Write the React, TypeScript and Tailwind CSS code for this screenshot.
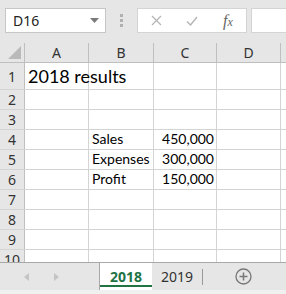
import React from "react";

const cols = [64, 65, 63, 64, 20];
const colNames = ["A", "B", "C", "D", ""];
const rowHeights = [27, 20, 20, 20, 20, 20, 20, 20, 20, 20];

type Cell = { text: string; align?: "left" | "right"; big?: boolean };
const data: Record<string, Cell> = {
  "0-0": { text: "2018 results", big: true },
  "3-1": { text: "Sales" },
  "3-2": { text: "450,000", align: "right" },
  "4-1": { text: "Expenses" },
  "4-2": { text: "300,000", align: "right" },
  "5-1": { text: "Profit" },
  "5-2": { text: "150,000", align: "right" },
};

export default function App() {
  return (
    <div className="w-[286px] h-[294px] overflow-hidden bg-white flex flex-col" style={{ fontFamily: "Lato, 'Noto Sans', sans-serif" }}>
      {/* Formula bar area */}
      <div className="h-[43px] shrink-0 bg-[#e6e6e6] flex items-start pt-[8px] pl-[5px]">
        <div className="w-[101px] h-[25px] bg-white border border-[#c6c6c6] flex items-center justify-between pl-[7px] pr-[6px]">
          <span className="text-[14px] text-[#222]" style={{ fontFamily: "'Noto Sans', sans-serif" }}>D16</span>
          <svg width="9" height="5" viewBox="0 0 9 5"><path d="M0 0h9L4.5 5z" fill="#7a7a7a" /></svg>
        </div>
        <div className="w-[31px] h-[25px] flex flex-col items-center justify-center gap-[2px]">
          <div className="w-[3px] h-[3px] bg-[#b0b0b0]" />
          <div className="w-[3px] h-[3px] bg-[#b0b0b0]" />
          <div className="w-[3px] h-[3px] bg-[#b0b0b0]" />
        </div>
        <div className="w-[110px] h-[25px] bg-white border border-[#d4d4d4] flex items-center">
          <div className="w-[36px] flex justify-center">
            <svg width="11" height="11" viewBox="0 0 11 11"><path d="M1 1l9 9M10 1l-9 9" stroke="#b4b4b4" strokeWidth="1.2" /></svg>
          </div>
          <div className="w-[36px] flex justify-center">
            <svg width="12" height="10" viewBox="0 0 12 10"><path d="M1 5.5l3.5 3.5L11 1" stroke="#b4b4b4" strokeWidth="1.4" fill="none" /></svg>
          </div>
          <div className="w-[36px] flex justify-center">
            <span className="text-[16px] italic text-[#666] leading-none" style={{ fontFamily: "'Liberation Serif', serif" }}>f<span className="text-[12px]">x</span></span>
          </div>
        </div>
        <div className="ml-[4px] flex-1 h-[25px] bg-white border-y border-l border-[#d4d4d4]" />
      </div>

      {/* Column header */}
      <div className="h-[20px] shrink-0 flex bg-[#e6e6e6] border-b border-[#bfbfbf]">
        <div className="w-[25px] shrink-0 border-r border-[#bfbfbf] relative">
          <svg className="absolute right-[3px] bottom-[3px]" width="13" height="13" viewBox="0 0 13 13"><path d="M13 0V13H0z" fill="#b9b9b9" /></svg>
        </div>
        {cols.map((w, i) => (
          <div key={i} className="shrink-0 border-r border-[#bfbfbf] flex items-center justify-center text-[14px] text-[#333]" style={{ width: w, fontFamily: "'Noto Sans', sans-serif" }}>
            {colNames[i]}
          </div>
        ))}
      </div>

      {/* Grid */}
      <div className="flex-1 overflow-hidden">
        {rowHeights.map((h, r) => (
          <div key={r} className="flex border-b border-[#d4d4d4]" style={{ height: h }}>
            <div className="w-[25px] shrink-0 bg-[#e6e6e6] border-r border-[#bfbfbf] flex items-center justify-center text-[14px] text-[#333]" style={{ fontFamily: "'Noto Sans', sans-serif" }}>
              {r + 1}
            </div>
            {cols.map((w, c) => {
              const cell = data[`${r}-${c}`];
              return (
                <div key={c} className={`shrink-0 border-r border-[#d4d4d4] flex items-end pb-[1px] whitespace-nowrap overflow-visible ${cell?.align === "right" ? "justify-end pr-[2px]" : "pl-[3px]"}`} style={{ width: w }}>
                  {cell && (
                    <span className={cell.big ? "text-[18px] text-black leading-[24px]" : "text-[14px] text-black leading-[18px]"}>{cell.text}</span>
                  )}
                </div>
              );
            })}
          </div>
        ))}
      </div>

      {/* Sheet tabs */}
      <div className="h-[28px] shrink-0 flex bg-[#e6e6e6] border-t border-[#a8a8a8]">
        <div className="w-[100px] shrink-0 border-r border-[#a8a8a8] flex items-center">
          <div className="w-[29px] flex justify-end">
            <svg width="5" height="8" viewBox="0 0 5 8"><path d="M5 0v8L0 4z" fill="#c4c4c4" /></svg>
          </div>
          <div className="w-[30px] flex justify-end">
            <svg width="5" height="8" viewBox="0 0 5 8"><path d="M0 0v8l5-4z" fill="#c4c4c4" /></svg>
          </div>
        </div>
        <div className="w-[52px] shrink-0 bg-white flex items-center justify-center relative">
          <span className="text-[14px] font-bold text-[#217346]" style={{ fontFamily: "'Noto Sans', sans-serif" }}>2018</span>
          <div className="absolute left-0 right-0 bottom-[3px] h-[2px] bg-[#217346]" />
        </div>
        <div className="w-[50px] shrink-0 flex items-center justify-center">
          <span className="text-[14px] text-[#333]" style={{ fontFamily: "'Noto Sans', sans-serif" }}>2019</span>
        </div>
        <div className="w-[1px] h-[16px] self-center bg-[#999]" />
        <div className="flex-1 flex items-center justify-center pr-[3px]">
          <svg width="17" height="17" viewBox="0 0 17 17"><circle cx="8.5" cy="8.5" r="7.5" fill="none" stroke="#777" strokeWidth="1.3" /><path d="M8.5 4.5v8M4.5 8.5h8" stroke="#777" strokeWidth="1.5" /></svg>
        </div>
      </div>
      <div className="h-[4px] shrink-0 bg-[#f0f0f0]" />
    </div>
  );
}
